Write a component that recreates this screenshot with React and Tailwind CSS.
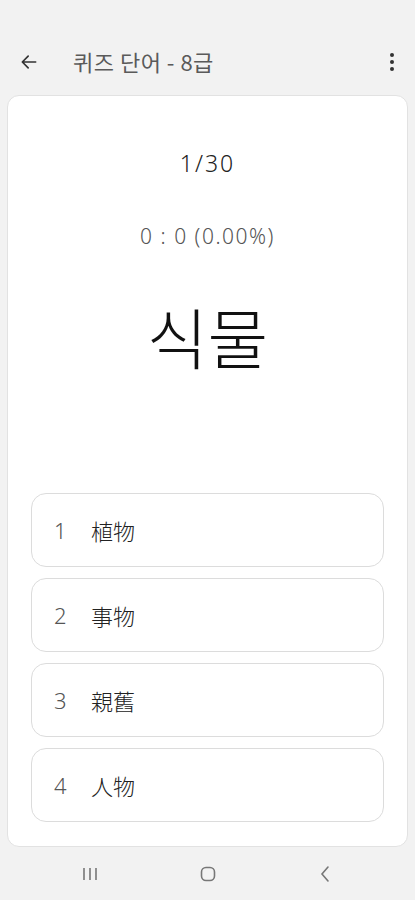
import React from "react";

const choices = [
  { no: 1, text: "植物" },
  { no: 2, text: "事物" },
  { no: 3, text: "親舊" },
  { no: 4, text: "人物" },
];

const font = {
  fontFamily: '"Noto Sans", "Noto Sans CJK KR", sans-serif',
};

const cjk = { fontFamily: '"Noto Sans CJK KR", sans-serif', fontWeight: 300 };

const App = () => {
  return (
    <div
      className="flex h-[900px] w-full flex-col bg-[#f2f2f2]"
      style={font}
    >
      <div className="flex h-[95px] items-center px-[19px] pt-[28px]">
        <svg width="20" height="20" viewBox="0 0 24 24" className="text-[#333]">
          <path
            d="M20 12H5M11 5l-7 7 7 7"
            fill="none"
            stroke="currentColor"
            strokeWidth="2"
            strokeLinecap="round"
            strokeLinejoin="round"
          />
        </svg>
        <h1
          className="ml-[34px] flex-1 text-[22px] tracking-[0.5px] text-[#5a5a5a]"
          style={{ fontFamily: '"Noto Sans CJK KR", sans-serif', fontWeight: 400 }}
        >
          퀴즈 단어 - 8급
        </h1>
        <div className="mr-[2px] flex flex-col items-center gap-[3px]">
          <span className="block h-[4px] w-[4px] rounded-full bg-[#333]" />
          <span className="block h-[4px] w-[4px] rounded-full bg-[#333]" />
          <span className="block h-[4px] w-[4px] rounded-full bg-[#333]" />
        </div>
      </div>

      <div className="mx-[7px] flex h-[752px] flex-col rounded-[12px] border border-[#e2e2e2] bg-white px-[23px] pb-[24px]">
        <div className="mt-[50px] text-center text-[23px] font-light leading-[34px] tracking-[2px] text-[#222]">
          1/30
        </div>
        <div className="mt-[41px] text-center text-[21px] font-light leading-[30px] tracking-[1.5px] text-[#555]">
          0 : 0 (0.00%)
        </div>
        <div
          className="mt-[44px] text-center text-[66px] leading-[80px] text-[#111]"
          style={cjk}
        >
          식물
        </div>

        <div className="mt-auto flex flex-col gap-[11px]">
          {choices.map((c) => (
            <div
              key={c.no}
              className="flex h-[74px] items-center rounded-[15px] border border-[#dcdcdc] px-[22px]"
            >
              <span className="w-[37px] text-[22px] font-light text-[#555]">
                {c.no}
              </span>
              <span className="text-[22px] text-[#222]" style={cjk}>
                {c.text}
              </span>
            </div>
          ))}
        </div>
      </div>

      <div className="flex flex-1 items-center justify-between px-[80px] text-[#777]">
        <svg width="20" height="20" viewBox="0 0 20 20">
          <path d="M4 4v12M10 4v12M16 4v12" stroke="currentColor" strokeWidth="1.6" />
        </svg>
        <svg width="20" height="20" viewBox="0 0 20 20">
          <rect x="3.5" y="3.5" width="13" height="13" rx="4.5" fill="none" stroke="currentColor" strokeWidth="1.6" />
        </svg>
        <svg width="20" height="20" viewBox="0 0 20 20">
          <path d="M13 3l-6 7 6 7" fill="none" stroke="currentColor" strokeWidth="1.6" strokeLinecap="round" />
        </svg>
      </div>
    </div>
  );
};

export default App;
